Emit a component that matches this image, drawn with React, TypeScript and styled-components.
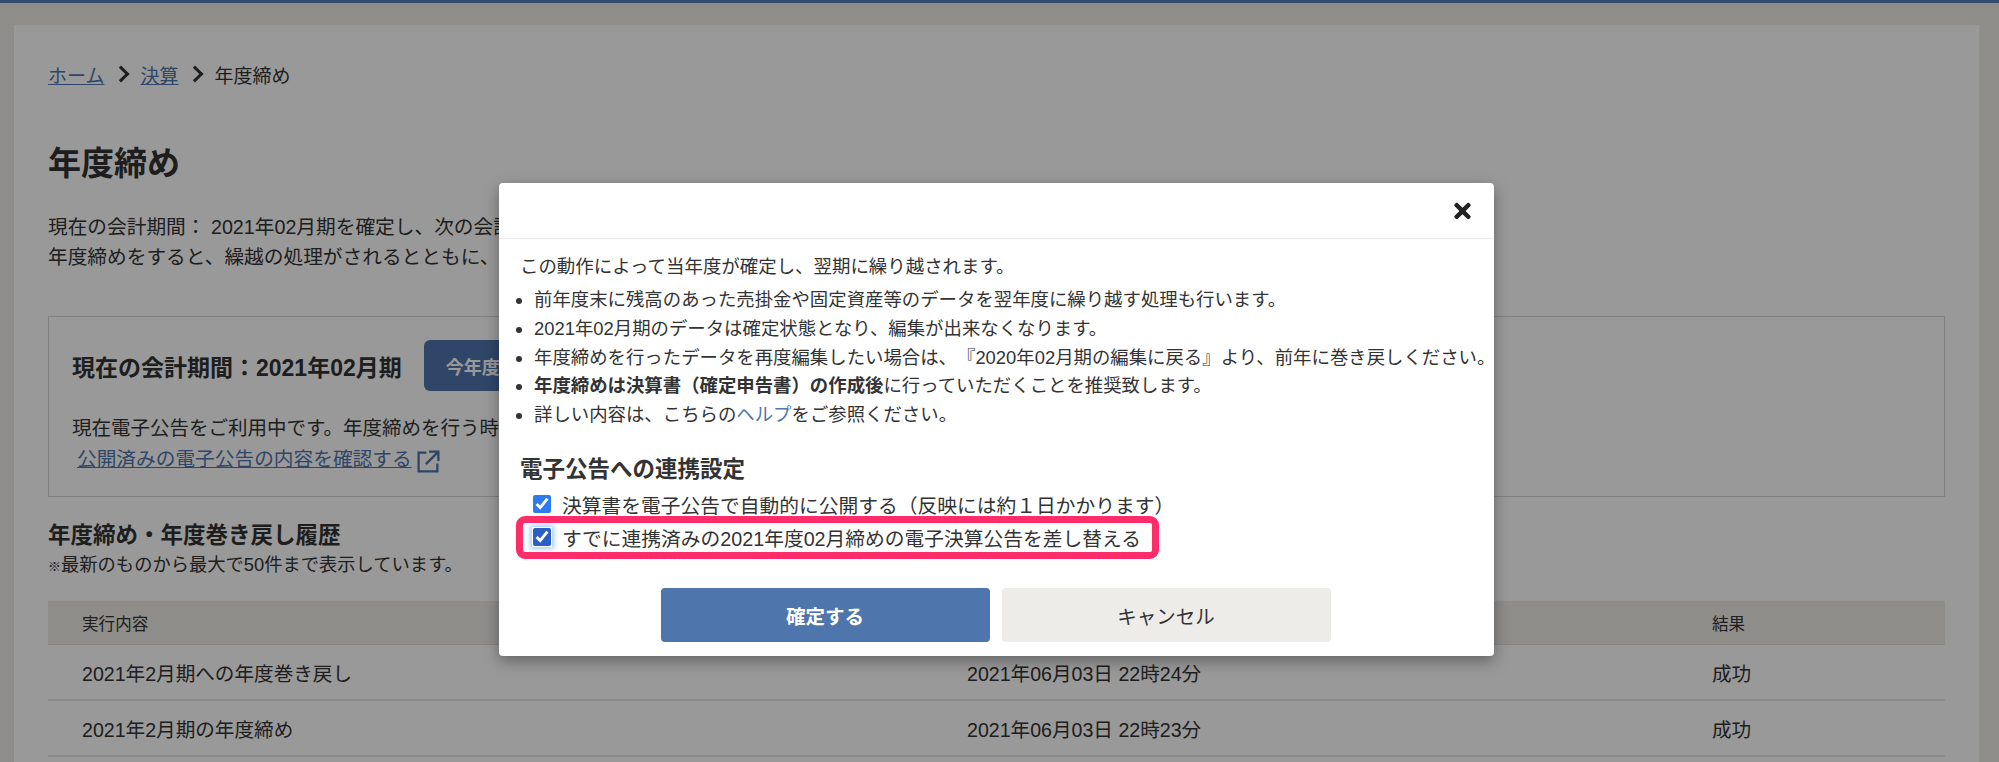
import React from "react";
import styled, { createGlobalStyle } from "styled-components";
import { FaTimes } from "react-icons/fa";

const GlobalStyle = createGlobalStyle`
  html, body {
    margin: 0;
    padding: 0;
    height: 100%;
    overflow: hidden;
    background-color: #eeece6;
  }
  body {
    font-family: "Liberation Sans", "Noto Sans CJK JP", sans-serif;
    color: #333;
    text-spacing-trim: space-all;
  }
`;

const rows = [
  { name: "2021年2月期への年度巻き戻し", date: "2021年06月03日 22時24分" },
  { name: "2021年2月期の年度締め", date: "2021年06月03日 22時23分" },
];

function App() {
  return (
    <Page>
      <GlobalStyle />
      <TopBar />
      <Card>
        <Breadcrumb>
          <CrumbLink href="#">ホーム</CrumbLink>
          <Chevron />
          <CrumbLink href="#">決算</CrumbLink>
          <Chevron />
          <span>年度締め</span>
        </Breadcrumb>
        <Title>年度締め</Title>
        <Description>
          現在の会計期間： 2021年02月期を確定し、次の会計期間へ進みます。
          <br />
          年度締めをすると、繰越の処理がされるとともに、データが確定します。
        </Description>
        <PeriodBox>
          <PeriodRow>
            <PeriodTitle>現在の会計期間：2021年02月期</PeriodTitle>
            <PrimaryButton>今年度を締める</PrimaryButton>
          </PeriodRow>
          <PeriodNote>現在電子公告をご利用中です。年度締めを行う時に連携設定ができます。</PeriodNote>
          <PeriodLinkLine>
            <PeriodLink href="#">公開済みの電子公告の内容を確認する</PeriodLink>
            <ExternalIcon viewBox="0 0 24 24">
              <path d="M10 3.5H2.5v18h18V14" />
              <path d="M9.5 14.5 21 3M12.5 2.5h9v9" />
            </ExternalIcon>
          </PeriodLinkLine>
        </PeriodBox>
        <SectionTitle>年度締め・年度巻き戻し履歴</SectionTitle>
        <SectionNote>
          <small>※</small>最新のものから最大で50件まで表示しています。
        </SectionNote>
        <HistoryHead>
          <span>実行内容</span>
          <span>実行日時</span>
          <span>結果</span>
        </HistoryHead>
        {rows.map((row) => (
          <HistoryRow key={row.date}>
            <span>{row.name}</span>
            <span>{row.date}</span>
            <span>成功</span>
          </HistoryRow>
        ))}
      </Card>

      <Overlay>
        <Modal>
          <ModalHeader>
            <CloseIcon />
          </ModalHeader>
          <ModalBody>
            <Lead>この動作によって当年度が確定し、翌期に繰り越されます。</Lead>
            <Notes>
              <li>前年度末に残高のあった売掛金や固定資産等のデータを翌年度に繰り越す処理も行います。</li>
              <li>2021年02月期のデータは確定状態となり、編集が出来なくなります。</li>
              <li>年度締めを行ったデータを再度編集したい場合は、『2020年02月期の編集に戻る』より、前年に巻き戻しください。</li>
              <li>
                <strong>年度締めは決算書（確定申告書）の作成後</strong>に行っていただくことを推奨致します。
              </li>
              <li>
                詳しい内容は、こちらの<HelpLink href="#">ヘルプ</HelpLink>をご参照ください。
              </li>
            </Notes>
            <SettingTitle>電子公告への連携設定</SettingTitle>
            <CheckRow>
              <CheckBox type="checkbox" defaultChecked readOnly />
              決算書を電子公告で自動的に公開する（反映には約１日かかります）
            </CheckRow>
            <CheckRow>
              <CheckBox type="checkbox" defaultChecked readOnly $focused />
              すでに連携済みの2021年度02月締めの電子決算公告を差し替える
              <Highlight />
            </CheckRow>
          </ModalBody>
          <ModalFooter>
            <ConfirmButton>確定する</ConfirmButton>
            <CancelButton>キャンセル</CancelButton>
          </ModalFooter>
        </Modal>
      </Overlay>
    </Page>
  );
}

export default App;

const Page = styled.div`
  position: relative;
  width: 1999px;
  height: 762px;
  overflow: hidden;
`;

const TopBar = styled.div`
  height: 3px;
  background-color: #567fb8;
`;

const Card = styled.div`
  margin: 22px 20px 0 14px;
  padding: 34px 34px 0;
  height: 800px;
  background-color: #fff;
`;

const Breadcrumb = styled.div`
  display: flex;
  align-items: center;
  height: 30px;
  font-size: 19px;
`;

const CrumbLink = styled.a`
  color: #4f75ad;
  text-decoration: underline;
`;

const Chevron = styled.span`
  width: 9px;
  height: 9px;
  margin: 0 13px 0 11px;
  border-top: 3px solid #333;
  border-right: 3px solid #333;
  transform: rotate(45deg);
`;

const Title = styled.h1`
  margin: 53px 0 0;
  font-size: 33px;
  line-height: 44px;
  font-weight: 700;
`;

const Description = styled.p`
  margin: 26px 0 0;
  font-size: 19.7px;
  line-height: 30px;
`;

const PeriodBox = styled.div`
  margin-top: 44px;
  padding: 23px 23px;
  height: 181px;
  box-sizing: border-box;
  border: 1px solid #d8d6d0;
`;

const PeriodRow = styled.div`
  display: flex;
  align-items: center;
  gap: 22px;
  height: 51px;
`;

const PeriodTitle = styled.div`
  font-size: 23px;
  font-weight: 700;
`;

const PrimaryButton = styled.button`
  height: 51px;
  padding: 0 22px;
  border: none;
  border-radius: 6px;
  background-color: #4f75ad;
  color: #fff;
  font: inherit;
  font-size: 18px;
  font-weight: 700;
`;

const PeriodNote = styled.div`
  margin-top: 22px;
  font-size: 19.5px;
  line-height: 30px;
`;

const PeriodLinkLine = styled.div`
  display: flex;
  align-items: center;
  padding-left: 5px;
  font-size: 19.7px;
  line-height: 30px;
`;

const PeriodLink = styled.a`
  color: #4f75ad;
  text-decoration: underline;
`;

const ExternalIcon = styled.svg`
  width: 25px;
  height: 25px;
  margin: 6px 0 0 4px;
  fill: none;
  stroke: #4f75ad;
  stroke-width: 2.2;
`;

const SectionTitle = styled.h2`
  margin: 24px 0 0;
  font-size: 22.5px;
  line-height: 30px;
  font-weight: 700;
`;

const SectionNote = styled.div`
  height: 26px;
  margin-top: 1px;
  font-size: 18.3px;
  line-height: 26px;
  small {
    font-size: 13px;
    line-height: 0;
  }
`;

const HistoryHead = styled.div`
  display: grid;
  grid-template-columns: 885px 745px 1fr;
  align-items: center;
  margin-top: 23px;
  padding-left: 34px;
  height: 44px;
  box-sizing: border-box;
  background-color: #eeece6;
  border-bottom: 1px solid #dedcd6;
  font-size: 16.6px;
`;

const HistoryRow = styled.div`
  display: grid;
  grid-template-columns: 885px 745px 1fr;
  align-items: center;
  padding-left: 34px;
  height: 56px;
  box-sizing: border-box;
  border-bottom: 2px solid #e6e4de;
  font-size: 19.6px;
`;

const Overlay = styled.div`
  position: absolute;
  inset: 0;
  padding: 183px 0 0 499px;
  background-color: rgba(0, 0, 0, 0.4);
`;

const Modal = styled.div`
  width: 995px;
  height: 473px;
  box-sizing: border-box;
  background-color: #fff;
  border-radius: 4px;
  box-shadow: 0 5px 15px rgba(0, 0, 0, 0.35);
`;

const ModalHeader = styled.div`
  display: flex;
  align-items: center;
  justify-content: flex-end;
  height: 55px;
  padding-right: 23px;
  box-sizing: content-box;
  border-bottom: 1px solid #eeece8;
`;

const CloseIcon = styled(FaTimes)`
  width: 17px;
  height: 24px;
  color: #222;
`;

const ModalBody = styled.div`
  padding: 14px 22px 0 21px;
`;

const Lead = styled.p`
  margin: 0;
  font-size: 18.45px;
  line-height: 28px;
`;

const Notes = styled.ul`
  margin: 5px 0 0;
  padding-left: 14px;
  font-size: 18.4px;
  line-height: 28.8px;
  white-space: nowrap;
`;

const HelpLink = styled.a`
  color: #4f75ad;
  text-decoration: none;
`;

const SettingTitle = styled.h3`
  margin: 25px 0 3px;
  font-size: 22.5px;
  line-height: 30px;
  font-weight: 700;
`;

const CheckRow = styled.label`
  position: relative;
  display: flex;
  align-items: center;
  gap: 11px;
  height: 33px;
  padding-left: 13px;
  font-size: 19.75px;
`;

const CheckBox = styled.input<{ $focused?: boolean }>`
  width: 18px;
  height: 18px;
  margin: 0;
  border-radius: 4px;
  accent-color: ${(p) => (p.$focused ? "#2a5fc4" : "#2d7bf0")};
  box-shadow: ${(p) => (p.$focused ? "0 0 0 1px #fff, 0 0 5px 3px #a8ccff" : "none")};
`;

const Highlight = styled.span`
  position: absolute;
  top: -4.5px;
  left: -4px;
  width: 643px;
  height: 43px;
  box-sizing: border-box;
  border: 7px solid #fe2c68;
  border-radius: 9px;
  pointer-events: none;
`;

const ModalFooter = styled.div`
  display: flex;
  justify-content: center;
  gap: 12px;
  margin-top: 34.5px;
  padding-right: 2px;
`;

const ConfirmButton = styled.button`
  width: 329px;
  height: 54px;
  border: none;
  border-radius: 4px;
  background-color: #4f75ad;
  color: #fff;
  font: inherit;
  font-size: 19.5px;
  font-weight: 700;
`;

const CancelButton = styled.button`
  width: 329px;
  height: 54px;
  border: none;
  border-radius: 4px;
  background-color: #eeece8;
  color: #333;
  font: inherit;
  font-size: 19.5px;
`;
